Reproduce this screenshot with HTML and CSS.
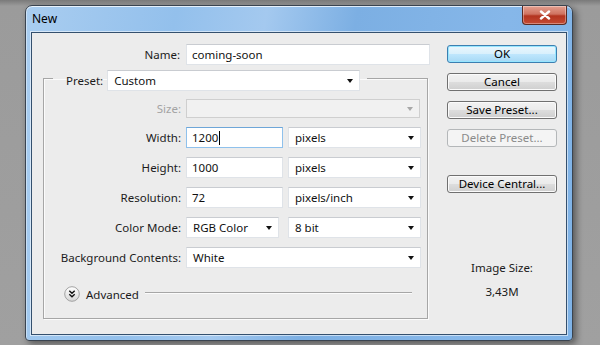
FILE: index.html
```html
<!DOCTYPE html>
<html lang="en">
<head>
    <meta charset="UTF-8">
    <title>New</title>
    <link rel="stylesheet" href="styles.css">
</head>
<body>
    <div class="window">
        <div class="titlebar">
            <span class="title">New</span>
            <div class="close-btn">
                <svg width="12" height="10" viewBox="0 0 12 10">
                    <path d="M2 1.5 L10 8.5 M10 1.5 L2 8.5" stroke="#fff" stroke-width="2.4" stroke-linecap="round"/>
                </svg>
            </div>
        </div>

        <div class="client">
            <div class="form">
                <div class="name-row">
                    <span class="label name-label">Name:</span>
                    <div class="textbox name-box">coming-soon</div>
                </div>

                <fieldset class="preset-group">
                    <legend class="preset-legend">
                        <span class="label">Preset:</span>
                        <div class="dropdown preset-drop">Custom</div>
                    </legend>

                    <div class="rows">
                        <span class="label disabled">Size:</span>
                        <div class="dropdown size-drop disabled"></div>

                        <span class="label">Width:</span>
                        <div class="pair">
                            <div class="textbox num-box focused">1200<span class="caret"></span></div>
                            <div class="dropdown unit-drop">pixels</div>
                        </div>

                        <span class="label">Height:</span>
                        <div class="pair">
                            <div class="textbox num-box">1000</div>
                            <div class="dropdown unit-drop">pixels</div>
                        </div>

                        <span class="label">Resolution:</span>
                        <div class="pair">
                            <div class="textbox num-box">72</div>
                            <div class="dropdown unit-drop">pixels/inch</div>
                        </div>

                        <span class="label">Color Mode:</span>
                        <div class="pair">
                            <div class="dropdown mode-drop">RGB Color</div>
                            <div class="dropdown unit-drop">8 bit</div>
                        </div>

                        <span class="label">Background Contents:</span>
                        <div class="dropdown wide-drop">White</div>
                    </div>

                    <div class="advanced">
                        <svg class="adv-icon" width="16" height="16" viewBox="0 0 16 16">
                            <defs>
                                <linearGradient id="advFill" x1="0" y1="0" x2="0" y2="1">
                                    <stop offset="0" stop-color="#ffffff"/>
                                    <stop offset="1" stop-color="#d6d6d6"/>
                                </linearGradient>
                            </defs>
                            <circle cx="8" cy="8" r="7.3" fill="url(#advFill)" stroke="#9a9a9a" stroke-width="0.9"/>
                            <path d="M5.3 4.8 L8 7.2 L10.7 4.8 M5.3 8.3 L8 10.7 L10.7 8.3" fill="none" stroke="#111" stroke-width="1.4"/>
                        </svg>
                        <span class="adv-text">Advanced</span>
                        <span class="adv-line"></span>
                    </div>
                </fieldset>
            </div>

            <div class="actions">
                <div class="btn btn-default">OK</div>
                <div class="btn">Cancel</div>
                <div class="btn">Save Preset...</div>
                <div class="btn btn-disabled">Delete Preset...</div>
                <div class="btn btn-device">Device Central...</div>
                <div class="image-size">Image Size:</div>
                <div class="image-value">3,43M</div>
            </div>
        </div>
    </div>
</body>
</html>
```

FILE: styles.css
```css
body {
    margin: 0;
    padding: 0;
    width: 600px;
    height: 345px;
    overflow: hidden;
    background: linear-gradient(180deg, #7a7a7a 0px, #9b9b9b 6px, #a0a0a0 100%);
    font-family: "Noto Sans", "Open Sans", Arial, sans-serif;
    font-size: 11.5px;
    color: #1b1b1b;
}
.window {
    box-sizing: border-box;
    margin: 5px 0 0 25px;
    width: 548px;
    height: 336px;
    padding: 0 5px 5px 5px;
    border: 1px solid #3a4450;
    border-radius: 7px 7px 4px 4px;
    background: linear-gradient(100deg, #a9cdf0 0%, #93c0ec 25%, #a4c9ef 40%, #7cafe3 55%, #86b7e9 80%, #7fb3e7 100%);
    box-shadow: inset 0 1px 0 rgba(255,255,255,0.75), inset 1px 0 0 rgba(255,255,255,0.4), 3px 3px 7px rgba(0,0,0,0.45);
    display: flex;
    flex-direction: column;
}
.titlebar {
    height: 26px;
    display: flex;
    align-items: flex-start;
}
.title {
    margin: 4px 0 0 1px;
    font-size: 12px;
    color: #000;
}
.close-btn {
    margin-left: auto;
    box-sizing: border-box;
    width: 45px;
    height: 19px;
    border: 1px solid #5b2b23;
    border-top: none;
    border-radius: 0 0 4px 4px;
    background: linear-gradient(180deg, #e4a090 0%, #cf7260 45%, #b3341f 55%, #c44a33 100%);
    box-shadow: inset 0 0 0 1px rgba(255,255,255,0.35);
    display: flex;
    align-items: center;
    justify-content: center;
}
.client {
    flex: 1;
    border: 1px solid #34506e;
    background: #ececec;
    box-shadow: 0 0 0 1px rgba(255,255,255,0.55);
    display: grid;
    grid-template-columns: 387px 110px;
    column-gap: 17px;
    padding: 11px 0 0 11px;
    align-items: start;
}

/* form column */
.label {
    text-align: right;
    white-space: nowrap;
}
.label.disabled {
    color: #a3a3a3;
}
.name-row {
    display: flex;
    align-items: center;
}
.name-label {
    width: 137px;
    margin-right: 6px;
}
.textbox, .dropdown {
    box-sizing: border-box;
    height: 21px;
    line-height: 19px;
    background: #fff;
    border: 1px solid #dfe3e8;
    border-top-color: #c9ccd1;
    white-space: nowrap;
    color: #111;
}
.textbox {
    padding-left: 5px;
}
.dropdown {
    position: relative;
    padding-left: 6px;
}
.dropdown::after {
    content: "";
    position: absolute;
    right: 6px;
    top: 8px;
    border-left: 3.5px solid transparent;
    border-right: 3.5px solid transparent;
    border-top: 4px solid #111;
}
.dropdown.disabled {
    background: #f1f1f1;
    border-color: #cfcfcf;
    height: 19px;
}
.dropdown.disabled::after {
    border-top-color: #a8a8a8;
    top: 7px;
}
.name-box {
    width: 244px;
}
.focused {
    border-color: #8fc1ec;
    border-top-color: #6ea6d8;
}
.caret {
    display: inline-block;
    width: 1px;
    height: 14px;
    margin-left: 1px;
    vertical-align: -3px;
    background: #000;
}

.preset-group {
    box-sizing: border-box;
    width: 385px;
    margin: 1px 0 0 0;
    padding: 8px 5px 16px 9px;
    border: 1px solid #a6a6a6;
    box-shadow: 1px 1px 0 #fbfbfb, inset 1px 1px 0 #fbfbfb;
}
.preset-legend {
    display: flex;
    align-items: center;
    padding: 4px 7px 0 13px;
}
.preset-legend .label {
    margin-right: 4px;
}
.preset-drop {
    width: 253px;
}
.rows {
    display: grid;
    grid-template-columns: 128px 235px;
    column-gap: 5px;
    row-gap: 9px;
    align-items: center;
}
.size-drop, .wide-drop {
    width: 235px;
}
.size-drop {
    width: 234px;
}
.pair {
    display: flex;
    justify-content: space-between;
}
.num-box {
    width: 97px;
}
.mode-drop {
    width: 93px;
}
.unit-drop {
    width: 133px;
}
.advanced {
    display: flex;
    align-items: center;
    margin: 18px 0 0 11px;
    height: 16px;
}
.adv-icon {
    display: block;
}
.adv-text {
    margin-left: 6px;
}
.adv-line {
    flex: 1;
    height: 1px;
    margin: 0 10px 0 6px;
    position: relative;
    top: -2px;
    background: #a6a6a6;
    box-shadow: 0 1px 0 #fbfbfb;
}

/* buttons column */
.actions {
    display: flex;
    flex-direction: column;
    padding-top: 1px;
}
.btn {
    box-sizing: border-box;
    height: 18px;
    line-height: 16px;
    margin-bottom: 10px;
    text-align: center;
    color: #000;
    border: 1px solid #707070;
    border-radius: 3px;
    background: linear-gradient(180deg, #f2f2f2 0%, #ebebeb 48%, #dddddd 52%, #cfcfcf 100%);
    box-shadow: inset 0 0 0 1px #fbfbfb;
}
.btn-default {
    border-color: #3c7fb1;
    background: linear-gradient(180deg, #eaf6fd 0%, #d9f0fc 48%, #bee6fd 52%, #a7d9f5 100%);
    box-shadow: inset 0 0 0 1px #97e6ff;
}
.btn-disabled {
    color: #8a8a8a;
    border-color: #b4b7b9;
    background: #f4f4f4;
    box-shadow: none;
}
.btn-device {
    margin-top: 18px;
}
.image-size {
    margin-top: 57px;
    text-align: center;
    line-height: 16px;
}
.image-value {
    margin-top: 8px;
    text-align: center;
    line-height: 16px;
}
```
